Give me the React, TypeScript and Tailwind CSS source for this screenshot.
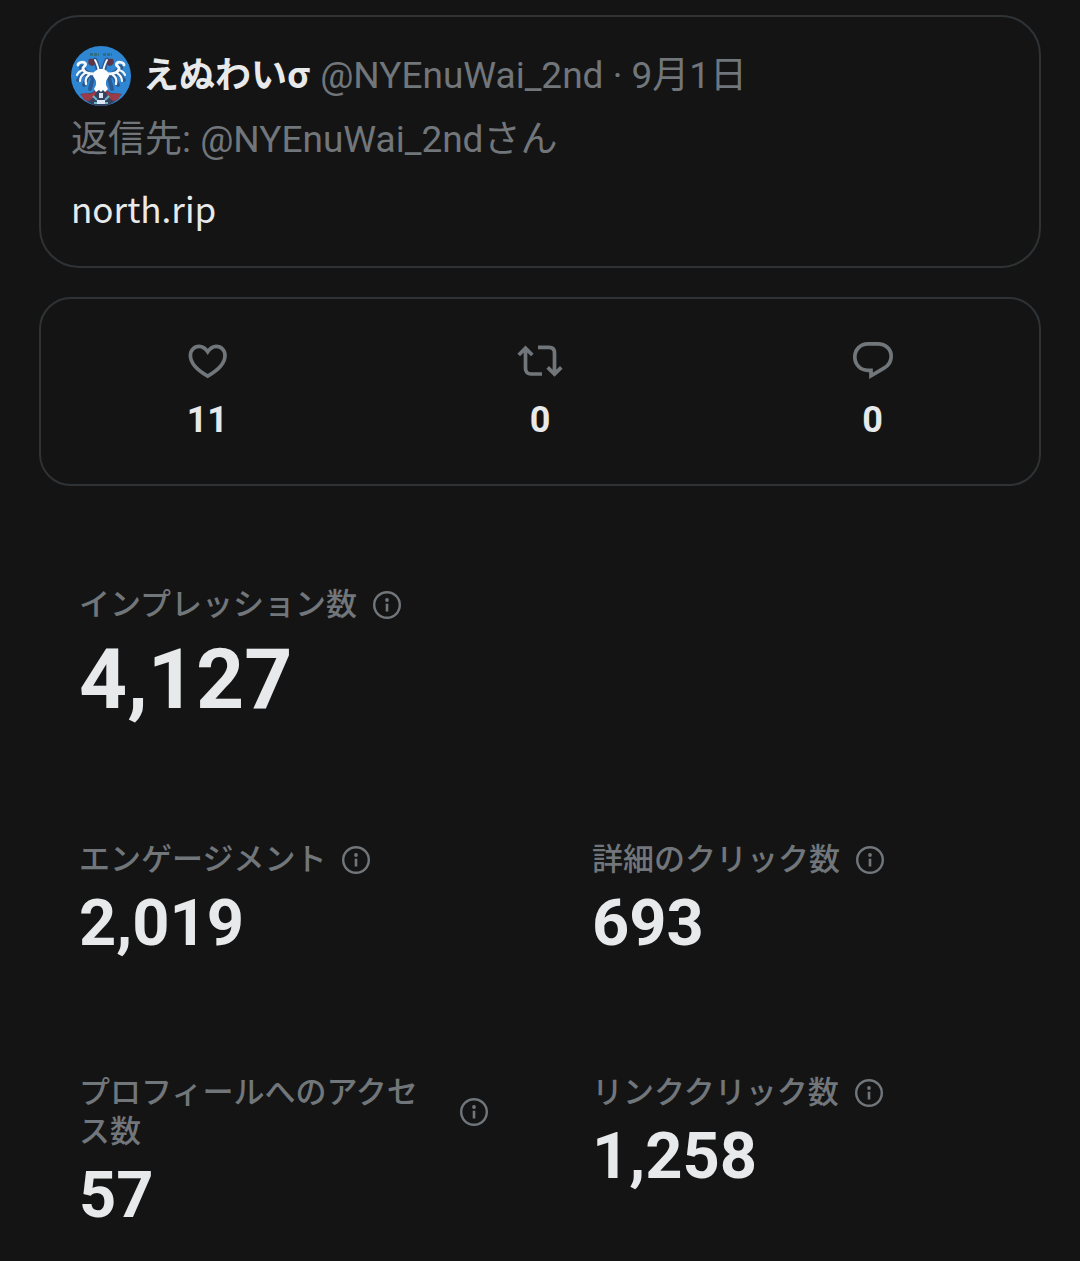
import React from "react";

function Avatar() {
  return (
    <svg viewBox="0 0 60 60" className="size-[60px] shrink-0 rounded-full" role="img" aria-label="avatar">
      <rect width="60" height="60" fill="#2f86d3" />
      <path d="M19 8.500h9M32 8.500h9" stroke="#2d6b78" strokeWidth="2.500" strokeDasharray="3 1" />
      <g fill="none" stroke="#2b5a92" strokeLinecap="round" strokeLinejoin="round">
        <path d="M24 30C17 29 13 26 11 22M36 30C43 29 47 26 49 22" strokeWidth="6" />
        <path d="M13 27l-6 7M17 30l-4 9M22 32l-3 11M47 27l6 7M43 30l4 9M38 32l3 11" strokeWidth="4" />
        <path d="M28 26C27 22 26 18 24 14M32 26C33 22 34 18 36 14" strokeWidth="5" />
      </g>
      <path d="M18 13c4-1 7 1 7 4l-3 3c-4 0-6-3-4-7zM42 13c-4-1-7 1-7 4l3 3c4 0 6-3 4-7z" fill="#5d3549" />
      <path d="M9 48l11-1 7-4h6l7 4 11 1-8 8-7 4H24l-7-4z" fill="#34415f" />
      <path d="M10 48c4-2 9 1 11-1l5-3-3 7-5 4-5-1zM50 48c-4-2-9 1-11-1l-5-3 3 7 5 4 5-1z" fill="#9c3b48" />
      <g fill="none" stroke="#f3f8fd" strokeLinecap="round" strokeLinejoin="round">
        <path d="M24 28C17 28 12 26 12 22C13 20 16 19 14 17C11 15 7 17 7 19" strokeWidth="2.800" />
        <path d="M36 28C43 28 48 26 48 22C47 20 44 19 46 17C49 15 53 17 53 19" strokeWidth="2.800" />
        <path d="M12 24C9 25 7 26 6 29M14 27C11 29 9 31 9 35M18 29C15 31 14 34 15 38" strokeWidth="2.200" />
        <path d="M48 24C51 25 53 26 54 29M46 27C49 29 51 31 51 35M42 29C45 31 46 34 45 38" strokeWidth="2.200" />
        <path d="M28 25C27 21 26 17 24 14M32 25C33 21 34 17 36 14" strokeWidth="1.900" />
      </g>
      <path d="M23 26l4-3h6l4 3 1 4-3 5 0 4 2 4-3 3-2-2-2 2-2-2-3 2-2-3 2-4v-4l-3-5z" fill="#fbfdff" />
      <path d="M28 47h4v5h-4zM26 54h8v4h-8z" fill="#dbe7f5" />
      <path d="M22 50l4 4M38 50l-4 4M23 57h3M34 57h3" stroke="#6fb6c8" strokeWidth="2" />
    </svg>
  );
}

const iconProps = {
  viewBox: "0 0 48 48",
  fill: "none",
  stroke: "currentColor",
  strokeWidth: 3.7,
  className: "size-12 text-[#71767b]",
  "aria-hidden": true,
} as const;

function HeartIcon() {
  return (
    <svg {...iconProps}>
      <path d="M24.700 14.700C22.300 11.200 19.200 9.300 16.200 9.300C11.100 9.300 7.400 13.300 7.400 18.600C7.400 26.200 14.700 33.500 24.700 39.200C34.700 33.500 42 26.200 42 18.600C42 13.300 38.300 9.300 33.200 9.300C30.200 9.300 27.100 11.200 24.700 14.700Z" />
    </svg>
  );
}

function RepostIcon() {
  return (
    <svg {...iconProps}>
      <path d="M2.700 18L9.500 11.200L16.300 18M9.500 12V31.500C9.500 34.800 11.500 37 15 37H26" />
      <path d="M45.300 30.400L38.500 37.200L31.700 30.400M38.500 36.500V16C38.500 12.600 36.500 10.400 33 10.400H22" />
    </svg>
  );
}

function ReplyIcon() {
  return (
    <svg {...iconProps}>
      <path d="M19 6.800H29C36.500 6.800 42.200 12.300 42.200 19.300C42.200 24.500 39.500 28.600 35 31.200L22 38.800V33.400H19C11.500 33.400 5.800 27.600 5.800 20.100C5.800 12.500 11.500 6.800 19 6.800Z" />
    </svg>
  );
}

function InfoButton({ label }: { label: string }) {
  return (
    <button type="button" aria-label={label} className="size-7 shrink-0 text-[#71767b]">
      <svg viewBox="0 0 28 28" fill="none" className="size-7" aria-hidden="true">
        <circle cx="14" cy="14" r="12.800" stroke="currentColor" strokeWidth="2.400" />
        <circle cx="14" cy="9" r="1.900" fill="currentColor" />
        <path d="M14 12.700V20.500" stroke="currentColor" strokeWidth="2.600" />
      </svg>
    </button>
  );
}

function Metric({ label, value, large = false }: { label: string; value: string; large?: boolean }) {
  return (
    <div>
      <div className="flex items-center gap-4">
        <span className="text-[31px] leading-[39px] font-medium text-[#71767b]">{label}</span>
        <InfoButton label={label} />
      </div>
      <div className={large ? "text-[84px] leading-[112px] font-bold" : "text-[65px] leading-[88px] font-bold"}>
        {value}
      </div>
    </div>
  );
}

const counts = [
  { name: "いいね", value: "11", Icon: HeartIcon },
  { name: "リポスト", value: "0", Icon: RepostIcon },
  { name: "返信", value: "0", Icon: ReplyIcon },
];

export default function App() {
  return (
    <main
      lang="ja"
      className="min-h-screen bg-[#141414] px-[39px] pt-[15px] pb-6 font-[Roboto,'Noto_Sans_CJK_JP',sans-serif] text-[#e7e9ea]"
    >
      <article className="rounded-[40px] border-2 border-[#2f3336] px-[30px] pt-[29px] pb-[38px] text-[37px] leading-[48px]">
        <header className="flex items-center gap-3">
          <Avatar />
          <div className="flex items-baseline gap-[10px]">
            <span className="font-['Noto_Sans_CJK_JP',sans-serif] text-[36px] leading-[40px] font-bold">えぬわいσ</span>
            <span className="text-[#71767b]">@NYEnuWai_2nd · 9月1日</span>
          </div>
        </header>
        <p className="mt-[10px] text-[#71767b]">返信先: @NYEnuWai_2ndさん</p>
        <p className="mt-6 font-['Noto_Sans_CJK_JP',sans-serif] text-[35px] leading-[40px]">north.rip</p>
      </article>

      <section className="mt-[29px] grid grid-cols-3 rounded-[32px] border-2 border-[#2f3336] pt-[38px] pb-[40px]">
        {counts.map(({ name, value, Icon }) => (
          <div key={name} aria-label={name} className="flex flex-col items-center">
            <Icon />
            <span className="mt-[11px] text-[36px] leading-[48px] font-bold">{value}</span>
          </div>
        ))}
      </section>

      <section className="mt-[99px] px-10">
        <Metric label="インプレッション数" value="4,127" large />
        <div className="mt-[104px] grid grid-cols-2 gap-x-[104px] gap-y-[106px]">
          <Metric label="エンゲージメント" value="2,019" />
          <Metric label="詳細のクリック数" value="693" />
          <Metric label="プロフィールへのアクセス数" value="57" />
          <Metric label="リンククリック数" value="1,258" />
        </div>
      </section>
    </main>
  );
}
